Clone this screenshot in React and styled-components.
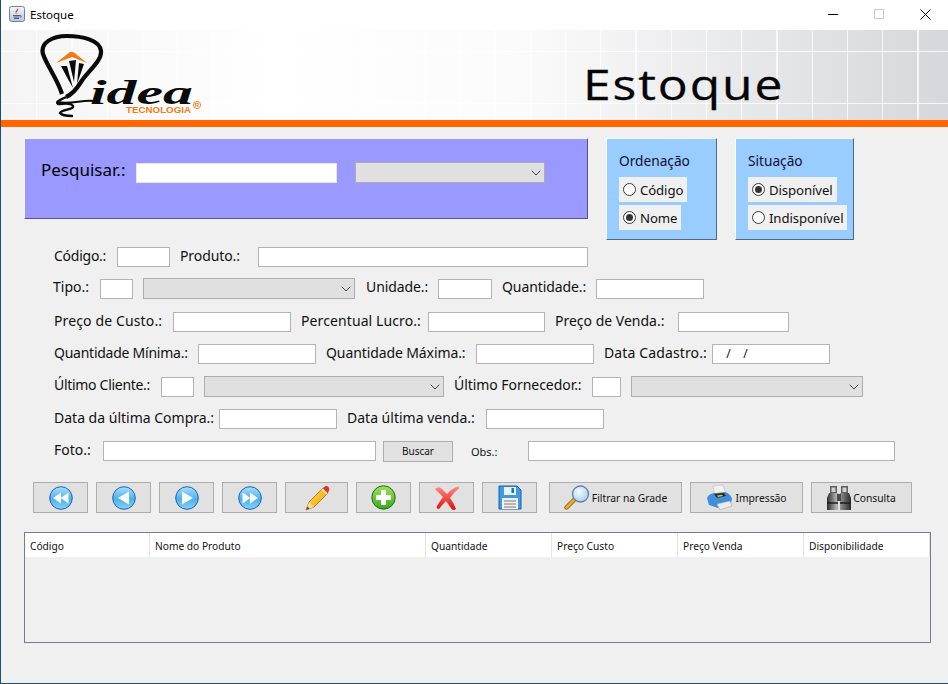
import React from "react";
import styled, { createGlobalStyle } from "styled-components";
import { ChevronDown } from "lucide-react";

const GlobalStyle = createGlobalStyle`
  html, body {
    margin: 0;
    padding: 0;
    background: #f0f0f0;
  }
  * { box-sizing: border-box; }
`;

const Window = styled.div`
  width: 948px;
  height: 684px;
  overflow: hidden;
  background: #f0f0f0;
  border-left: 1px solid #1c4f6b;
  border-bottom: 1px solid #1c4f6b;
  font-family: "Noto Sans", "Open Sans", sans-serif;
  font-size: 14px;
  color: #111;
`;

const TitleBar = styled.div`
  height: 30px;
  background: #fff;
  display: flex;
  align-items: center;
  padding: 0 0 2px 8px;
  font-size: 11.5px;
  color: #000;
`;

const TitleText = styled.span`
  margin-left: 5px;
  flex: 1;
`;

const WinBtn = styled.div`
  width: 46px;
  height: 28px;
  display: flex;
  align-items: center;
  justify-content: center;
`;

const Banner = styled.div`
  height: 90px;
  padding-left: 39px;
  display: flex;
  align-items: flex-start;
  background:
    repeating-linear-gradient(90deg, transparent 0 34px, rgba(255,255,255,.75) 34px 35.25px),
    repeating-linear-gradient(180deg, transparent 0 21px, rgba(255,255,255,.8) 21px 22px, transparent 22px 52px),
    linear-gradient(90deg, #f4f4f5 0, #fff 270px, #fbfbfb 520px, #d6d7dc 947px);
  background-position: 1px 0, 0 0, 0 0;
`;

const LogoSvg = styled.svg`
  width: 175px;
  height: 90px;
  flex: none;
`;

const BannerTitle = styled.div`
  margin-left: 368px;
  margin-top: 24px;
  font-family: "Open Sans", "Noto Sans", sans-serif;
  font-size: 42px;
  line-height: 60px;
  letter-spacing: 1.6px;
  color: #060606;
  -webkit-text-stroke: 0.3px #060606;
  transform: scaleX(1.185);
  transform-origin: left center;
`;

const Stripe = styled.div`
  height: 7px;
  background: #ff6600;
`;

const Content = styled.div`
  padding: 11px 0 0 23px;
`;

const TopRow = styled.div`
  display: flex;
  height: 102px;
  align-items: flex-start;
`;

const SearchPanel = styled.div`
  width: 564px;
  height: 81px;
  background: #9999ff;
  border-top: 1px solid #f4f4ff;
  border-left: 1px solid #f4f4ff;
  border-right: 1px solid #55557f;
  border-bottom: 1px solid #55557f;
  display: flex;
  align-items: flex-start;
  padding: 24px 0 0 16px;
`;

const SearchLabel = styled.span`
  font-size: 17px;
  line-height: 20px;
  width: 95px;
  margin-top: -3px;
  color: #000;
`;

const SearchInput = styled.div`
  width: 201px;
  height: 20px;
  background: #fff;
  border: 1px solid #e8e8e8;
  margin-right: 18px;
`;

const SidePanel = styled.div`
  width: ${(p) => p.$w}px;
  height: 102px;
  margin-left: 18px;
  background: #99ccff;
  border-top: 1px solid #eaffff;
  border-left: 1px solid #eaffff;
  border-right: 1px solid #4e6a88;
  border-bottom: 1px solid #4e6a88;
  padding: 12px 0 0 12px;
`;

const SideTitle = styled.div`
  font-size: 13.7px;
  line-height: 19px;
  margin-bottom: 7px;
  color: #101030;
`;

const RadioRow = styled.div`
  display: flex;
  width: fit-content;
  height: 25px;
  align-items: center;
  background: #f0f0f0;
  padding: 0 4px;
  margin-bottom: 3px;
  gap: 4px;
  font-size: 13.2px;
  letter-spacing: -0.1px;
  color: #111;
`;

const RadioDot = styled.span`
  width: 13px;
  height: 13px;
  border-radius: 50%;
  border: 1px solid #3a3a3a;
  background: #fff;
  display: flex;
  align-items: center;
  justify-content: center;
  &::after {
    content: "";
    display: ${(p) => (p.$on ? "block" : "none")};
    width: 7px;
    height: 7px;
    border-radius: 50%;
    background: #333;
  }
`;

const Form = styled.div`
  margin-top: 7px;
  padding-left: 30px;
`;

const Row = styled.div`
  display: flex;
  align-items: center;
  height: ${(p) => p.$h || 20}px;
  margin-bottom: ${(p) => p.$mb ?? 12}px;
`;

const Label = styled.span`
  width: ${(p) => p.$w}px;
  flex: none;
  white-space: nowrap;
  padding-bottom: 4px;
  letter-spacing: ${(p) => p.$ls || 0}px;
  margin-left: ${(p) => p.$ml || 0}px;
`;

const Input = styled.div`
  width: ${(p) => p.$w}px;
  height: 20px;
  flex: none;
  background: #fff;
  border: 1px solid #b4b4b4;
  margin-right: ${(p) => p.$mr ?? 10}px;
  font-size: 12px;
  line-height: 18px;
  padding-left: ${(p) => (p.$mask ? 1 : 0)}px;
  word-spacing: 1px;
  white-space: pre;
`;

const Select = styled.div`
  width: ${(p) => p.$w}px;
  height: 21px;
  flex: none;
  background: #e0e0e0;
  border: 1px solid #adadad;
  margin-right: ${(p) => p.$mr ?? 10}px;
  display: flex;
  align-items: center;
  justify-content: flex-end;
  color: #444;
`;

const SearchSelect = styled(Select)`
  margin-top: -1px;
`;

const SmallButton = styled.div`
  width: 70px;
  height: 21px;
  flex: none;
  background: #e1e1e1;
  border: 1px solid #adadad;
  font-size: 10px;
  display: flex;
  align-items: center;
  justify-content: center;
  margin-left: 7px;
`;

const SmallLabel = styled.span`
  font-size: 11px;
  width: 57px;
  margin-left: 18px;
  flex: none;
`;

const Toolbar = styled.div`
  display: flex;
  margin: 21px 0 0 9px;
  height: 31px;
`;

const ToolButton = styled.div`
  width: ${(p) => p.$w}px;
  height: 31px;
  flex: none;
  margin-right: ${(p) => p.$mr ?? 8}px;
  background: #e1e1e1;
  border: 1px solid #adadad;
  display: flex;
  align-items: center;
  justify-content: center;
  gap: 2px;
  font-size: 10.3px;
  color: #111;
`;

const Table = styled.div`
  margin-top: 19px;
  width: 907px;
  height: 111px;
  border: 1px solid #7a7a8a;
  background: #f0f0f0;
`;

const HeaderRow = styled.div`
  display: flex;
  height: 24px;
  width: 905px;
  background: #fff;
`;

const HeaderCell = styled.div`
  width: ${(p) => p.$w}px;
  flex: none;
  font-size: 10.2px;
  line-height: 26px;
  padding-left: 5px;
  border-right: 1px solid #e4e4e4;
`;

const RoundBlue = ({ dir, double }) => {
  const flip = dir === "left" ? "" : "scale(-1 1) translate(-24 0)";
  return (
    <svg width="24" height="24" viewBox="0 0 24 24">
      <defs>
        <linearGradient id="navBlue" x1="0" y1="0" x2="0" y2="1">
          <stop offset="0" stopColor="#a8e0f9" />
          <stop offset="0.55" stopColor="#4fb0ea" />
          <stop offset="1" stopColor="#86d4f6" />
        </linearGradient>
      </defs>
      <circle cx="12" cy="12" r="11.3" fill="url(#navBlue)" stroke="#1c63b0" strokeWidth="1" />
      <g transform={flip} fill="#f4faff">
        {double ? (
          <>
            <path d="M4 12 L12 6.5 V17.5 Z" />
            <path d="M11.5 12 L19.5 6.5 V17.5 Z" />
          </>
        ) : (
          <path d="M6 12 L17 5.5 V18.5 Z" />
        )}
      </g>
    </svg>
  );
};

const Pencil = () => (
  <svg width="27" height="26" viewBox="0 0 27 26">
    <defs>
      <linearGradient id="pencilBody" x1="0" y1="0" x2="1" y2="1">
        <stop offset="0" stopColor="#ffe84a" />
        <stop offset="1" stopColor="#f09a08" />
      </linearGradient>
    </defs>
    <path d="M6 17 L20 3 L25 8 L11 22 L3 25 Z" fill="url(#pencilBody)" stroke="#a8650c" strokeWidth=".8" />
    <path d="M6 17 L11 22 L3 25 Z" fill="#f6d8a8" />
    <path d="M4.5 21.5 L6.5 23.7 L3 25 Z" fill="#7a3a10" />
    <path d="M20 3 L22.5 1 Q24 0.5 25.5 2 Q27 4 26 5.5 L25 8 Z" fill="#e0352a" />
    <path d="M19 4 L24 9" stroke="#ddd" strokeWidth="1.6" />
  </svg>
);

const PlusIcon = () => (
  <svg width="25" height="25" viewBox="0 0 25 25">
    <defs>
      <linearGradient id="plusGreen" x1="0" y1="0" x2="0" y2="1">
        <stop offset="0" stopColor="#a5e05a" />
        <stop offset="1" stopColor="#33ad1e" />
      </linearGradient>
    </defs>
    <circle cx="12.5" cy="12.5" r="11.7" fill="url(#plusGreen)" stroke="#17750f" />
    <path d="M10 5 H15 V10 H20 V15 H15 V20 H10 V15 H5 V10 H10 Z" fill="#fff" />
  </svg>
);

const CrossIcon = () => (
  <svg width="26" height="26" viewBox="0 0 26 26">
    <defs>
      <linearGradient id="crossRed" x1="0" y1="0" x2="0" y2="1">
        <stop offset="0" stopColor="#ff8a80" />
        <stop offset="1" stopColor="#e01010" />
      </linearGradient>
    </defs>
    <path
      d="M1 4 Q4 1 7 3 L13 9 Q18 3 24 1.5 Q25.5 2 25 3.5 Q19 8 16 13 Q20 18 22 24 Q20 25.5 18 24.5 L12 16 Q8 20 5 24 Q2.5 24 2.5 22 Q5 17 9 12 Z"
      fill="url(#crossRed)"
    />
  </svg>
);

const SaveIcon = () => (
  <svg width="24" height="25" viewBox="0 0 24 25">
    <path d="M1 1 H19 L23 5 V24 H1 Z" fill="#3f9be0" stroke="#1a5fa8" />
    <rect x="6" y="2" width="12" height="8" fill="#e8f0f8" />
    <rect x="13.5" y="3" width="2.5" height="5" fill="#2a6db0" />
    <rect x="4" y="13" width="16" height="11" fill="#f2f2f2" />
    <path d="M6 16 H18 M6 19 H18 M6 22 H18" stroke="#777" />
  </svg>
);

const SearchIcon = () => (
  <svg width="26" height="25" viewBox="0 0 26 25">
    <defs>
      <radialGradient id="lens" cx="0.4" cy="0.35" r="0.8">
        <stop offset="0" stopColor="#f5fbff" />
        <stop offset="1" stopColor="#9cc6ec" />
      </radialGradient>
    </defs>
    <path d="M10 15 L2.5 22.5" stroke="#8a5a10" strokeWidth="4.4" strokeLinecap="round" />
    <path d="M10 15 L2.5 22.5" stroke="#f3a92a" strokeWidth="2.8" strokeLinecap="round" />
    <circle cx="16.5" cy="9" r="8" fill="url(#lens)" stroke="#5b7fa8" strokeWidth="1.3" />
  </svg>
);

const PrinterIcon = () => (
  <svg width="27" height="27" viewBox="0 0 27 27">
    <path d="M7 2 L17 1 L20 10 L9 12 Z" fill="#f2f2f2" stroke="#bbb" strokeWidth=".6" />
    <path d="M1 14 Q3 9 10 9 L19 8 Q25 10 26 15 L25 19 L12 24 L3 21 Z" fill="#3d8fdc" />
    <path d="M8 10 L18 9 L20 12 L11 14 Z" fill="#2b2b2b" />
    <path d="M11 11.5 L16 10.8 L17 12 L12 13 Z" fill="#f4c020" />
    <path d="M11 20 L24 17 L26 22 L14 26 Z" fill="#ececec" stroke="#aaa" strokeWidth=".6" />
  </svg>
);

const BinocularsIcon = () => (
  <svg width="24" height="25" viewBox="0 0 24 25">
    <defs>
      <linearGradient id="bino" x1="0" y1="0" x2="1" y2="0">
        <stop offset="0" stopColor="#2e2e2e" />
        <stop offset="0.4" stopColor="#b5b5b5" />
        <stop offset="1" stopColor="#2a2a2a" />
      </linearGradient>
    </defs>
    <path d="M3 1 H10 V8 H3 Z M14 1 H21 V8 H14 Z" fill="#5d5d5d" />
    <path d="M4.5 2.5 H8.5 V7 H4.5 Z M15.5 2.5 H19.5 V7 H15.5 Z" fill="#cfcfcf" />
    <path d="M2 8 H11 V25 H0 V13 Z M13 8 H22 L24 13 V25 H13 Z" fill="url(#bino)" />
    <rect x="10" y="9" width="4" height="7" fill="#4a4a4a" />
    <path d="M0 18 H11 M13 18 H24" stroke="#1c1c1c" strokeWidth="1.5" />
  </svg>
);

const JavaIcon = () => (
  <svg width="16" height="16" viewBox="0 0 16 16">
    <defs>
      <linearGradient id="javaBg" x1="0" y1="0" x2="0" y2="1">
        <stop offset="0" stopColor="#f4f7fb" />
        <stop offset="1" stopColor="#b5c5d8" />
      </linearGradient>
    </defs>
    <rect x=".5" y=".5" width="15" height="15" rx="2" fill="url(#javaBg)" stroke="#6f8399" />
    <path d="M9 2 Q10 4 8 5.5 Q6.5 7 8 8.5 Q6 7.5 6.5 5.5 Q7.5 4 9 2 Z" fill="#d9461e" />
    <path d="M4 9.5 H11 M4.5 11 H10.5 M5 12.5 H10" stroke="#3b5878" strokeWidth=".9" />
    <path d="M11 9.5 Q13.5 9.5 11.5 11.5" stroke="#3b5878" strokeWidth=".8" fill="none" />
  </svg>
);

const Logo = () => (
  <LogoSvg viewBox="0 0 175 90">
    <path
      d="M22 64 C17 48 7 36 3 24 C0 13 12 6 27 6 C42 6 60 10 61 21 C62 31 48 41 41 52 C36 60 31 65 26 67"
      fill="none"
      stroke="#0a0a0a"
      strokeWidth="4.2"
    />
    <path
      d="M26 67 C20 70 15 72 18 74 C24 74 31 72 33 76 C34 80 22 79 20 83 C22 86 28 86 33 86"
      fill="none"
      stroke="#0a0a0a"
      strokeWidth="2.4"
    />
    <path d="M18 72 C30 75 44 69 54 71" fill="none" stroke="#0a0a0a" strokeWidth="2" />
    <path d="M16 33 L30 22 Q32 21.5 34 22.5 L47 33 L32 27 Z" fill="#f47a14" />
    <path
      d="M21 36 Q26 46 33 58 L27 36 Z M29 31 L34 52 L36 30 Z M44 34 L37 54 L39 33 Z"
      fill="#0a0a0a"
    />
    <text
      x="50"
      y="74"
      fontFamily="Liberation Serif, serif"
      fontStyle="italic"
      fontWeight="700"
      fontSize="34"
      textLength="103"
      lengthAdjust="spacingAndGlyphs"
      fill="#0a0a0a"
    >
      idea
    </text>
    <text
      x="86"
      y="82.5"
      fontFamily="Liberation Sans, sans-serif"
      fontWeight="700"
      fontSize="9"
      textLength="65"
      lengthAdjust="spacingAndGlyphs"
      fill="#f47a14"
    >
      TECNOLOGIA
    </text>
    <circle cx="157" cy="75" r="3.6" fill="none" stroke="#f47a14" strokeWidth=".9" />
    <text x="154.8" y="77.4" fontFamily="Liberation Sans, sans-serif" fontWeight="700" fontSize="6" fill="#f47a14">
      R
    </text>
  </LogoSvg>
);

const Chevron = () => <ChevronDown size={16} strokeWidth={1.5} />;

const Radio = ({ on, children }) => (
  <RadioRow>
    <RadioDot $on={on} />
    {children}
  </RadioRow>
);

const columns = [
  ["Código", 125],
  ["Nome do Produto", 276],
  ["Quantidade", 126],
  ["Preço Custo", 126],
  ["Preço Venda", 126],
  ["Disponibilidade", 126],
];

export default function App() {
  return (
    <Window>
      <GlobalStyle />
      <TitleBar>
        <JavaIcon />
        <TitleText>Estoque</TitleText>
        <WinBtn>
          <svg width="10" height="10" viewBox="0 0 10 10">
            <path d="M0 5.5 H10" stroke="#000" />
          </svg>
        </WinBtn>
        <WinBtn>
          <svg width="10" height="10" viewBox="0 0 10 10">
            <rect x=".5" y=".5" width="9" height="9" fill="none" stroke="#ccc" />
          </svg>
        </WinBtn>
        <WinBtn>
          <svg width="11" height="11" viewBox="0 0 11 11">
            <path d="M.5 .5 L10.5 10.5 M10.5 .5 L.5 10.5" stroke="#000" />
          </svg>
        </WinBtn>
      </TitleBar>
      <Banner>
        <Logo />
        <BannerTitle>Estoque</BannerTitle>
      </Banner>
      <Stripe />
      <Content>
        <TopRow>
          <SearchPanel>
            <SearchLabel>Pesquisar.:</SearchLabel>
            <SearchInput />
            <SearchSelect $w={190}>
              <Chevron />
            </SearchSelect>
          </SearchPanel>
          <SidePanel $w={111}>
            <SideTitle>Ordenação</SideTitle>
            <Radio>Código</Radio>
            <Radio on>Nome</Radio>
          </SidePanel>
          <SidePanel $w={119}>
            <SideTitle>Situação</SideTitle>
            <Radio on>Disponível</Radio>
            <Radio>Indisponível</Radio>
          </SidePanel>
        </TopRow>
        <Form>
          <Row $mb={11}>
            <Label $w={63} $ls={-0.25}>Código.:</Label>
            <Input $w={53} />
            <Label $w={78} $ls={-0.1}>Produto.:</Label>
            <Input $w={330} />
          </Row>
          <Row $h={21} $mb={13}>
            <Label $w={47} $ml={-1}>Tipo.:</Label>
            <Input $w={33} />
            <Select $w={212} $mr={11}>
              <Chevron />
            </Select>
            <Label $w={72} $ls={-0.1}>Unidade.:</Label>
            <Input $w={54} />
            <Label $w={94} $ls={-0.1}>Quantidade.:</Label>
            <Input $w={108} />
          </Row>
          <Row>
            <Label $w={119} $ls={0.13}>Preço de Custo.:</Label>
            <Input $w={118} />
            <Label $w={127} $ls={0.1}>Percentual Lucro.:</Label>
            <Input $w={117} />
            <Label $w={123}>Preço de Venda.:</Label>
            <Input $w={111} />
          </Row>
          <Row>
            <Label $w={144} $ls={-0.25}>Quantidade Mínima.:</Label>
            <Input $w={118} />
            <Label $w={150} $ls={-0.1}>Quantidade Máxima.:</Label>
            <Input $w={118} />
            <Label $w={108} $ls={0.13}>Data Cadastro.:</Label>
            <Input $w={118} $mask>{"   /   /"}</Input>
          </Row>
          <Row $h={21}>
            <Label $w={107} $ls={-0.3}>Último Cliente.:</Label>
            <Input $w={33} />
            <Select $w={240}>
              <Chevron />
            </Select>
            <Label $w={138} $ls={-0.05}>Último Fornecedor.:</Label>
            <Input $w={29} />
            <Select $w={232}>
              <Chevron />
            </Select>
          </Row>
          <Row>
            <Label $w={165}>Data da última Compra.:</Label>
            <Input $w={118} />
            <Label $w={139}>Data última venda.:</Label>
            <Input $w={118} />
          </Row>
          <Row $mb={0}>
            <Label $w={49}>Foto.:</Label>
            <Input $w={273} $mr={0} />
            <SmallButton>Buscar</SmallButton>
            <SmallLabel>Obs.:</SmallLabel>
            <Input $w={367} />
          </Row>
        </Form>
        <Toolbar>
          <ToolButton $w={55}><RoundBlue dir="left" double /></ToolButton>
          <ToolButton $w={55}><RoundBlue dir="left" /></ToolButton>
          <ToolButton $w={55}><RoundBlue dir="right" /></ToolButton>
          <ToolButton $w={55}><RoundBlue dir="right" double /></ToolButton>
          <ToolButton $w={63}><Pencil /></ToolButton>
          <ToolButton $w={55}><PlusIcon /></ToolButton>
          <ToolButton $w={55}><CrossIcon /></ToolButton>
          <ToolButton $w={55} $mr={12}><SaveIcon /></ToolButton>
          <ToolButton $w={133}><SearchIcon />Filtrar na Grade</ToolButton>
          <ToolButton $w={113}><PrinterIcon />Impressão</ToolButton>
          <ToolButton $w={101} $mr={0}><BinocularsIcon />Consulta</ToolButton>
        </Toolbar>
        <Table>
          <HeaderRow>
            {columns.map(([name, w]) => (
              <HeaderCell key={name} $w={w}>{name}</HeaderCell>
            ))}
          </HeaderRow>
        </Table>
      </Content>
    </Window>
  );
}
